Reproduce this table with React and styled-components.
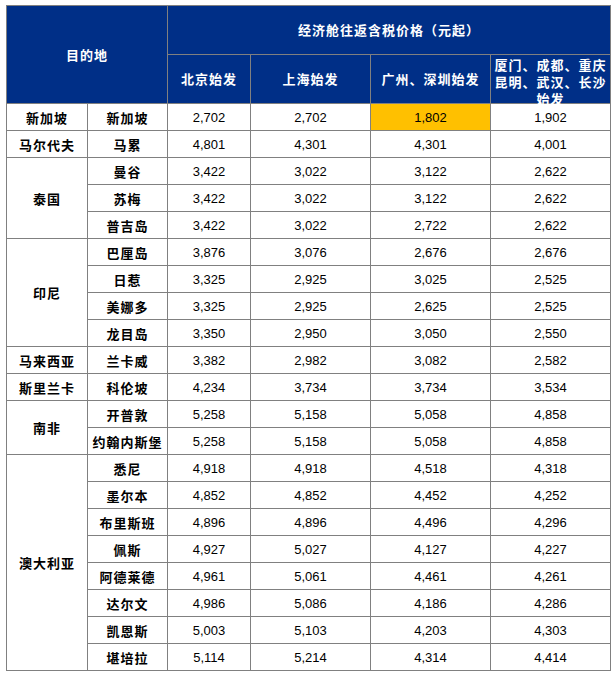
import React from 'react'
import styled, { createGlobalStyle } from 'styled-components'

const GlobalStyle = createGlobalStyle`
  body {
    margin: 0;
    padding: 5px 6px;
    background: #fff;
    font-family: "Liberation Sans", "Noto Sans CJK SC", sans-serif;
  }
`

const widths = [81, 80, 83, 120, 120, 120]

const rows = [
  { country: '新加坡', span: 1, city: '新加坡', prices: ['2,702', '2,702', '1,802', '1,902'], hot: 2 },
  { country: '马尔代夫', span: 1, city: '马累', prices: ['4,801', '4,301', '4,301', '4,001'] },
  { country: '泰国', span: 3, city: '曼谷', prices: ['3,422', '3,022', '3,122', '2,622'] },
  { city: '苏梅', prices: ['3,422', '3,022', '3,122', '2,622'] },
  { city: '普吉岛', prices: ['3,422', '3,022', '2,722', '2,622'] },
  { country: '印尼', span: 4, city: '巴厘岛', prices: ['3,876', '3,076', '2,676', '2,676'] },
  { city: '日惹', prices: ['3,325', '2,925', '3,025', '2,525'] },
  { city: '美娜多', prices: ['3,325', '2,925', '2,625', '2,525'] },
  { city: '龙目岛', prices: ['3,350', '2,950', '3,050', '2,550'] },
  { country: '马来西亚', span: 1, city: '兰卡威', prices: ['3,382', '2,982', '3,082', '2,582'] },
  { country: '斯里兰卡', span: 1, city: '科伦坡', prices: ['4,234', '3,734', '3,734', '3,534'] },
  { country: '南非', span: 2, city: '开普敦', prices: ['5,258', '5,158', '5,058', '4,858'] },
  { city: '约翰内斯堡', prices: ['5,258', '5,158', '5,058', '4,858'] },
  { country: '澳大利亚', span: 8, city: '悉尼', prices: ['4,918', '4,918', '4,518', '4,318'] },
  { city: '墨尔本', prices: ['4,852', '4,852', '4,452', '4,252'] },
  { city: '布里斯班', prices: ['4,896', '4,896', '4,496', '4,296'] },
  { city: '佩斯', prices: ['4,927', '5,027', '4,127', '4,227'] },
  { city: '阿德莱德', prices: ['4,961', '5,061', '4,461', '4,261'] },
  { city: '达尔文', prices: ['4,986', '5,086', '4,186', '4,286'] },
  { city: '凯恩斯', prices: ['5,003', '5,103', '4,203', '4,303'] },
  { city: '堪培拉', prices: ['5,114', '5,214', '4,314', '4,414'] },
]

export default function App() {
  return (
    <React.Fragment>
      <GlobalStyle />
      <PriceTable>
        <colgroup>
          {widths.map((w, i) => (
            <Col key={i} $w={w} />
          ))}
        </colgroup>
        <thead>
          <tr>
            <HeadCell colSpan={2} rowSpan={2}>目的地</HeadCell>
            <HeadCell colSpan={4}>经济舱往返含税价格（元起）</HeadCell>
          </tr>
          <tr>
            <HeadCell>北京始发</HeadCell>
            <HeadCell>上海始发</HeadCell>
            <HeadCell>广州、深圳始发</HeadCell>
            <HeadCell>
              <LineStack>
                <span>厦门、成都、重庆</span>
                <span>昆明、武汉、长沙</span>
                <span>始发</span>
              </LineStack>
            </HeadCell>
          </tr>
        </thead>
        <tbody>
          {rows.map((r) => (
            <Row key={r.city}>
              {r.country && <NameCell rowSpan={r.span}>{r.country}</NameCell>}
              <NameCell>{r.city}</NameCell>
              {r.prices.map((p, i) => (
                <PriceCell key={i} $hot={r.hot === i}>{p}</PriceCell>
              ))}
            </Row>
          ))}
        </tbody>
      </PriceTable>
    </React.Fragment>
  )
}

const PriceTable = styled.table`
  border-collapse: collapse;
  table-layout: fixed;
  width: 605px;
  border: 1px solid #808080;
`

const Col = styled.col`
  width: ${(p) => p.$w}px;
`

const HeadCell = styled.th`
  background: #002f87;
  color: #fff;
  font-family: "Noto Sans CJK SC", sans-serif;
  font-size: 13px;
  font-weight: 700;
  letter-spacing: 1px;
  line-height: 18px;
  text-align: center;
  vertical-align: middle;
  border: 1px solid #808080;
  padding: 0;
  height: 48px;
`

const LineStack = styled.div`
  height: 48px;
  display: flex;
  flex-direction: column;
  justify-content: center;
  align-items: center;
  line-height: 17px;
  padding-top: 4px;
  box-sizing: border-box;
  white-space: nowrap;
`

const Row = styled.tr`
  height: 27px;
`

const NameCell = styled.td`
  font-family: "Noto Sans CJK SC", sans-serif;
  font-size: 13px;
  font-weight: 700;
  letter-spacing: 1px;
  color: #000;
  text-align: center;
  vertical-align: middle;
  border: 1px solid #808080;
  padding: 0;
`

const PriceCell = styled.td`
  font-family: "Liberation Sans", sans-serif;
  font-size: 13px;
  color: #000;
  text-align: center;
  vertical-align: middle;
  border: 1px solid #808080;
  padding: 0;
  background: ${(p) => (p.$hot ? '#ffc000' : '#fff')};
`
